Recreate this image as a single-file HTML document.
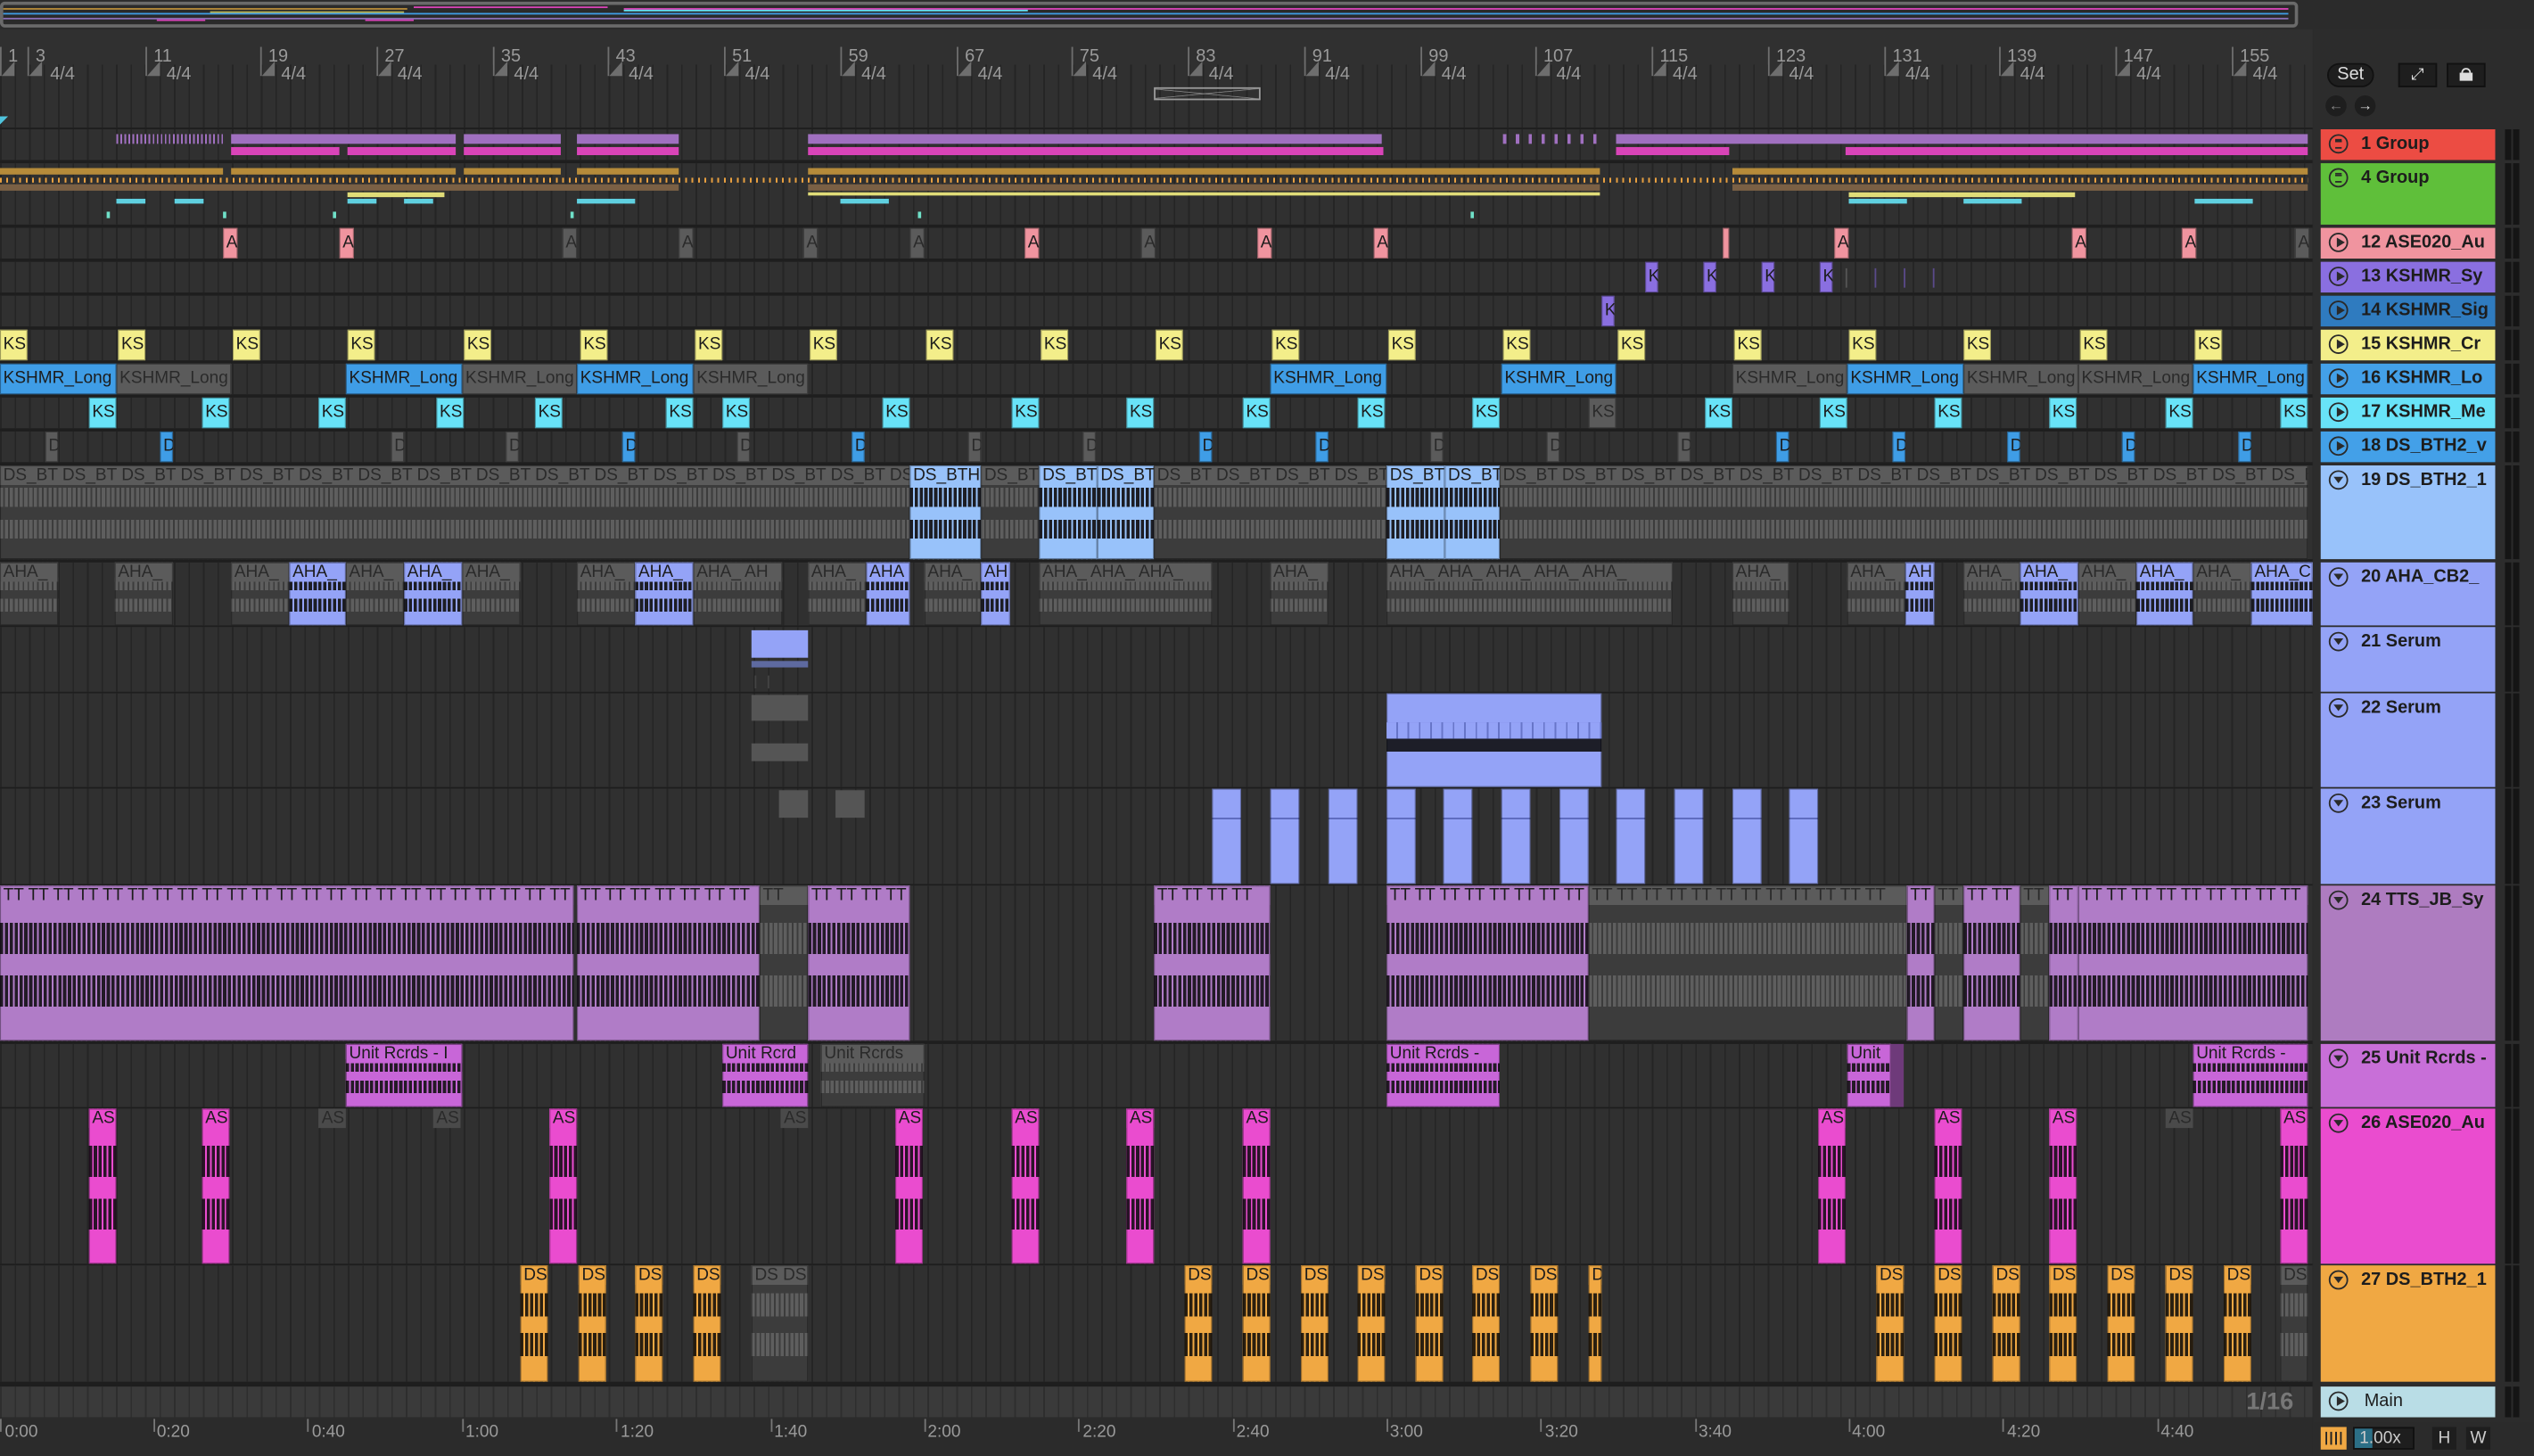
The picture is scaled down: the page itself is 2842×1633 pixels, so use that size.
<!DOCTYPE html>
<html><head><meta charset="utf-8">
<style>
html,body{margin:0;padding:0;background:#2b2b2b;overflow:hidden}
#w{position:absolute;left:0;top:0;width:1568px;height:901px;transform:scale(1.8125);transform-origin:0 0;background:#2b2b2b;font-family:"Liberation Sans",sans-serif;overflow:hidden}
i{font-style:normal}
.ab{position:absolute}
#ov{left:0;top:1px;width:1418px;height:12px;border:2px solid #6a6a6a;border-radius:3px;background:#2a2a2a}
#rul{left:0;top:18px;width:1431px;height:61px;background:#303030}
.grid{background-color:#303030;background-image:repeating-linear-gradient(90deg,#252525 0 1px,transparent 1px 8.966px)}
#arr{left:0;top:79px;width:1431px;height:798px;background:#1e1e1e}
.r{position:absolute;left:0;width:1431px}
.c{position:absolute;top:0;height:100%;overflow:hidden;white-space:nowrap;font-size:10.5px;line-height:12px;color:#1c1c1c;padding-left:2px;box-sizing:border-box;box-shadow:inset 0 0 0 0.6px rgba(0,0,0,.35);font-style:normal}
.s{line-height:19px}
.t{background:linear-gradient(to bottom,var(--h) 0 12px,transparent 12px),repeating-linear-gradient(90deg,transparent 0 2px,var(--b) 2px 3px),linear-gradient(to bottom,var(--b) 0 24%,var(--w) 24% 44%,var(--b) 44% 58%,var(--w) 58% 78%,var(--b) 78%)}
.s.g,.s.y,.s.bl,.s.cy,.s.pk,.s.pu,.s.sg{background:var(--h)}
.g{--h:#5b5b5b;--b:#3c3c3c;--w:#5e5e5e;color:#2a2a2a}
.y{--h:#f3ee8a}
.bl{--h:#3f9de6}
.cy{--h:#68e3f8}
.pk{--h:#f0949f}
.pu{--h:#8a6fe0}
.sg{--h:#2f7bbf}
.lb{--h:#98c2fa;--b:#98c2fa;--w:#1c1d24}
.ah{--h:#94a3f7;--b:#94a3f7;--w:#1c1d24}
.tt{--h:#b07cc7;--b:#b07cc7;--w:#221a26}
.un{--h:#c866d8;--b:#c866d8;--w:#241a26}
.as{--h:#ea4ccf;--b:#ea4ccf;--w:#2a1428}
.ds{--h:#f0a843;--b:#f0a843;--w:#2a1f10}
.band{position:absolute;height:5px}
.hd{position:absolute;left:1436px;width:108px;font-weight:bold;font-size:11px;color:#1d1d1d;box-sizing:border-box;padding-left:25px;line-height:19px;white-space:nowrap;overflow:hidden}
.hd .ic{position:absolute;left:5px;top:2.5px;width:12px;height:12px;border:1.3px solid #2a2a2a;border-radius:50%;box-sizing:border-box}
.hd .pl:after{content:"";position:absolute;left:4px;top:2.3px;border-left:5px solid #2a2a2a;border-top:3.3px solid transparent;border-bottom:3.3px solid transparent}
.hd .dn:after{content:"";position:absolute;left:2.2px;top:3.5px;border-top:4.5px solid #2a2a2a;border-left:3.3px solid transparent;border-right:3.3px solid transparent}
.hd .gr:after{content:"";position:absolute;left:2.5px;top:2.5px;width:4.5px;height:4px;border-top:1px solid #2a2a2a;border-bottom:1px solid #2a2a2a;box-shadow:0 1.5px 0 -0.5px #2a2a2a inset}
.m{position:absolute;left:1550px;width:10px;background:repeating-linear-gradient(90deg,#151515 0 4px,#2b2b2b 4px 5px)}
.bn{position:absolute;font-size:11px;color:#9a9a9a}
.fl{position:absolute;top:38px;width:0;height:0;border-left:8px solid transparent;border-bottom:9px solid #6e6e6e}
.fp{position:absolute;top:29px;width:1px;height:18px;background:#6e6e6e}
.tm{position:absolute;top:880px;font-size:10.5px;color:#9a9a9a}
.tk{position:absolute;top:878px;width:1px;height:8px;background:#777}
.ga{position:absolute;top:0;height:12px;background:#4a4a4a;color:#2a2a2a;font-size:10.5px;line-height:12px;padding-left:2px;box-sizing:border-box;overflow:hidden}
</style></head><body><div id="w">

<div id="ov" class="ab">
 <div class="ab" style="left:0;top:2px;width:250px;height:1px;background:#b68b3a"></div>
 <div class="ab" style="left:254px;top:1px;width:120px;height:1px;background:#d944b8"></div>
 <div class="ab" style="left:384px;top:2px;width:1030px;height:1px;background:#d944b8"></div>
 <div class="ab" style="left:0;top:5px;width:1414px;height:1px;background:#3f9de6"></div>
 <div class="ab" style="left:128px;top:4px;width:120px;height:1px;background:#b7b04e"></div>
 <div class="ab" style="left:0;top:8px;width:1414px;height:1px;background:#8a6fb4"></div>
 <div class="ab" style="left:95px;top:9px;width:30px;height:1px;background:#d944b8"></div>
 <div class="ab" style="left:224px;top:9px;width:30px;height:1px;background:#d944b8"></div>
 <div class="ab" style="left:384px;top:3px;width:250px;height:1px;background:#68e3f8"></div>
</div>

<div id="rul" class="ab">
 <div class="ab grid" style="left:0;top:22px;width:1431px;height:39px"></div>
</div>
<div class="ab" style="left:0;top:0;width:1431px;height:79px">
 <div class="fp" style="left:0"></div><div class="fl" style="left:1px"></div><div class="bn" style="left:5px;top:29px">1</div>
 <div class="fp" style="left:17px"></div><div class="fl" style="left:18px"></div><div class="bn" style="left:22px;top:29px">3</div><div class="bn" style="left:31px;top:40px">4/4</div>
 <div class="fp" style="left:90px"></div><div class="fl" style="left:91px"></div><div class="bn" style="left:95px;top:29px">11</div><div class="bn" style="left:103px;top:40px">4/4</div>
 <div class="fp" style="left:161px"></div><div class="fl" style="left:162px"></div><div class="bn" style="left:166px;top:29px">19</div><div class="bn" style="left:174px;top:40px">4/4</div>
 <div class="fp" style="left:233px"></div><div class="fl" style="left:234px"></div><div class="bn" style="left:238px;top:29px">27</div><div class="bn" style="left:246px;top:40px">4/4</div>
 <div class="fp" style="left:305px"></div><div class="fl" style="left:306px"></div><div class="bn" style="left:310px;top:29px">35</div><div class="bn" style="left:318px;top:40px">4/4</div>
 <div class="fp" style="left:376px"></div><div class="fl" style="left:377px"></div><div class="bn" style="left:381px;top:29px">43</div><div class="bn" style="left:389px;top:40px">4/4</div>
 <div class="fp" style="left:448px"></div><div class="fl" style="left:449px"></div><div class="bn" style="left:453px;top:29px">51</div><div class="bn" style="left:461px;top:40px">4/4</div>
 <div class="fp" style="left:520px"></div><div class="fl" style="left:521px"></div><div class="bn" style="left:525px;top:29px">59</div><div class="bn" style="left:533px;top:40px">4/4</div>
 <div class="fp" style="left:592px"></div><div class="fl" style="left:593px"></div><div class="bn" style="left:597px;top:29px">67</div><div class="bn" style="left:605px;top:40px">4/4</div>
 <div class="fp" style="left:663px"></div><div class="fl" style="left:664px"></div><div class="bn" style="left:668px;top:29px">75</div><div class="bn" style="left:676px;top:40px">4/4</div>
 <div class="fp" style="left:735px"></div><div class="fl" style="left:736px"></div><div class="bn" style="left:740px;top:29px">83</div><div class="bn" style="left:748px;top:40px">4/4</div>
 <div class="fp" style="left:807px"></div><div class="fl" style="left:808px"></div><div class="bn" style="left:812px;top:29px">91</div><div class="bn" style="left:820px;top:40px">4/4</div>
 <div class="fp" style="left:879px"></div><div class="fl" style="left:880px"></div><div class="bn" style="left:884px;top:29px">99</div><div class="bn" style="left:892px;top:40px">4/4</div>
 <div class="fp" style="left:950px"></div><div class="fl" style="left:951px"></div><div class="bn" style="left:955px;top:29px">107</div><div class="bn" style="left:963px;top:40px">4/4</div>
 <div class="fp" style="left:1022px"></div><div class="fl" style="left:1023px"></div><div class="bn" style="left:1027px;top:29px">115</div><div class="bn" style="left:1035px;top:40px">4/4</div>
 <div class="fp" style="left:1094px"></div><div class="fl" style="left:1095px"></div><div class="bn" style="left:1099px;top:29px">123</div><div class="bn" style="left:1107px;top:40px">4/4</div>
 <div class="fp" style="left:1166px"></div><div class="fl" style="left:1167px"></div><div class="bn" style="left:1171px;top:29px">131</div><div class="bn" style="left:1179px;top:40px">4/4</div>
 <div class="fp" style="left:1237px"></div><div class="fl" style="left:1238px"></div><div class="bn" style="left:1242px;top:29px">139</div><div class="bn" style="left:1250px;top:40px">4/4</div>
 <div class="fp" style="left:1309px"></div><div class="fl" style="left:1310px"></div><div class="bn" style="left:1314px;top:29px">147</div><div class="bn" style="left:1322px;top:40px">4/4</div>
 <div class="fp" style="left:1381px"></div><div class="fl" style="left:1382px"></div><div class="bn" style="left:1386px;top:29px">155</div><div class="bn" style="left:1394px;top:40px">4/4</div>
 <div class="ab" style="left:714px;top:54px;width:66px;height:8px;border:1px solid #9a9a9a;box-sizing:border-box;background:linear-gradient(to top right,transparent 46%,#9a9a9a 48%,transparent 52%),linear-gradient(to bottom right,transparent 46%,#9a9a9a 48%,transparent 52%)"></div>
 <div class="ab" style="left:0;top:72px;width:0;height:0;border-top:5px solid #4fc3dc;border-right:5px solid transparent"></div>
</div>

<div id="arr" class="ab">
<div class="r grid" style="top:1px;height:19px">
 <div class="band" style="left:72px;width:66px;top:3px;height:6px;background:repeating-linear-gradient(90deg,#a070c0 0 1px,transparent 1px 2.5px)"></div>
 <div class="band" style="left:143px;width:139px;top:3px;height:6px;background:#a070c0"></div><div class="band" style="left:287px;width:60px;top:3px;height:6px;background:#a070c0"></div>
 <div class="band" style="left:357px;width:63px;top:3px;height:6px;background:#a070c0"></div><div class="band" style="left:500px;width:355px;top:3px;height:6px;background:#a070c0"></div>
 <div class="band" style="left:930px;width:60px;top:3px;height:6px;background:repeating-linear-gradient(90deg,#a070c0 0 2px,transparent 2px 8px)"></div>
 <div class="band" style="left:1000px;width:428px;top:3px;height:6px;background:#a070c0"></div>
 <div class="band" style="left:143px;width:67px;top:11px;background:#d944b8"></div><div class="band" style="left:215px;width:67px;top:11px;background:#d944b8"></div>
 <div class="band" style="left:287px;width:60px;top:11px;background:#d944b8"></div><div class="band" style="left:357px;width:63px;top:11px;background:#d944b8"></div>
 <div class="band" style="left:500px;width:356px;top:11px;background:#d944b8"></div><div class="band" style="left:1000px;width:70px;top:11px;background:#d944b8"></div>
 <div class="band" style="left:1142px;width:286px;top:11px;background:#d944b8"></div>
</div>
<div class="r grid" style="top:22px;height:38px">
 <div class="band" style="left:0;width:138px;top:3px;height:4px;background:#b68b3a"></div><div class="band" style="left:143px;width:139px;top:3px;height:4px;background:#b68b3a"></div>
 <div class="band" style="left:287px;width:60px;top:3px;height:4px;background:#b68b3a"></div><div class="band" style="left:357px;width:63px;top:3px;height:4px;background:#b68b3a"></div>
 <div class="band" style="left:500px;width:490px;top:3px;height:4px;background:#b68b3a"></div><div class="band" style="left:1072px;width:356px;top:3px;height:4px;background:#b68b3a"></div>
 <div class="band" style="left:0;width:1428px;top:9px;height:3px;background:repeating-linear-gradient(90deg,#e8a040 0 1px,transparent 1px 4px)"></div>
 <div class="band" style="left:0;width:420px;top:13px;height:4px;background:#7a6045"></div><div class="band" style="left:500px;width:490px;top:13px;height:4px;background:#7a6045"></div>
 <div class="band" style="left:1072px;width:356px;top:13px;height:4px;background:#7a6045"></div>
 <div class="band" style="left:215px;width:60px;top:18px;height:3px;background:#e0dc78"></div><div class="band" style="left:500px;width:490px;top:18px;height:2px;background:#e0dc78"></div>
 <div class="band" style="left:1144px;width:140px;top:18px;height:3px;background:#e0dc78"></div>
 <div class="band" style="left:72px;width:18px;top:22px;height:3px;background:#5fd0e0"></div><div class="band" style="left:108px;width:18px;top:22px;height:3px;background:#5fd0e0"></div>
 <div class="band" style="left:215px;width:18px;top:22px;height:3px;background:#5fd0e0"></div><div class="band" style="left:250px;width:18px;top:22px;height:3px;background:#5fd0e0"></div>
 <div class="band" style="left:357px;width:36px;top:22px;height:3px;background:#5fd0e0"></div><div class="band" style="left:520px;width:30px;top:22px;height:3px;background:#5fd0e0"></div>
 <div class="band" style="left:1144px;width:36px;top:22px;height:3px;background:#5fd0e0"></div><div class="band" style="left:1215px;width:36px;top:22px;height:3px;background:#5fd0e0"></div>
 <div class="band" style="left:1358px;width:36px;top:22px;height:3px;background:#5fd0e0"></div>
 <div class="band" style="left:66px;width:2px;top:30px;height:4px;background:#6fe0c8"></div><div class="band" style="left:138px;width:2px;top:30px;height:4px;background:#6fe0c8"></div>
 <div class="band" style="left:206px;width:2px;top:30px;height:4px;background:#6fe0c8"></div><div class="band" style="left:353px;width:2px;top:30px;height:4px;background:#6fe0c8"></div>
 <div class="band" style="left:568px;width:2px;top:30px;height:4px;background:#6fe0c8"></div><div class="band" style="left:910px;width:2px;top:30px;height:4px;background:#6fe0c8"></div>
</div>
<div class="r grid" style="top:62px;height:19px">
 <i class="c s pk" style="left:138px;width:9px">A</i><i class="c s pk" style="left:210px;width:9px">A</i><i class="c s g" style="left:348px;width:9px">A</i><i class="c s g" style="left:420px;width:9px">A</i>
 <i class="c s g" style="left:497px;width:9px">A</i><i class="c s g" style="left:563px;width:9px">A</i><i class="c s pk" style="left:634px;width:9px">A</i><i class="c s g" style="left:706px;width:9px">A</i>
 <i class="c s pk" style="left:778px;width:9px">A</i><i class="c s pk" style="left:850px;width:9px">A</i><i class="c s pk" style="left:1066px;width:4px"></i><i class="c s pk" style="left:1135px;width:9px">A</i>
 <i class="c s pk" style="left:1282px;width:9px">A</i><i class="c s pk" style="left:1350px;width:9px">A</i><i class="c s g" style="left:1420px;width:9px">A</i>
</div>
<div class="r grid" style="top:83px;height:19px">
 <i class="c s pu" style="left:1018px;width:8px">K</i><i class="c s pu" style="left:1054px;width:8px">K</i><i class="c s pu" style="left:1090px;width:8px">K</i><i class="c s pu" style="left:1126px;width:8px">K</i>
 <i class="ab" style="left:1142px;top:4px;width:1px;height:12px;background:#555"></i><i class="ab" style="left:1160px;top:4px;width:1px;height:12px;background:#5a4a8a"></i><i class="ab" style="left:1178px;top:4px;width:1px;height:12px;background:#5a4a8a"></i><i class="ab" style="left:1196px;top:4px;width:1px;height:12px;background:#5a4a8a"></i>
</div>
<div class="r grid" style="top:104px;height:19px"><i class="c s pu" style="left:991px;width:8px">K</i></div>
<div class="r grid" style="top:125px;height:19px">
 <i class="c s y" style="left:0;width:17px">KS</i><i class="c s y" style="left:73px;width:17px">KS</i><i class="c s y" style="left:144px;width:17px">KS</i><i class="c s y" style="left:215px;width:17px">KS</i>
 <i class="c s y" style="left:287px;width:17px">KS</i><i class="c s y" style="left:359px;width:17px">KS</i><i class="c s y" style="left:430px;width:17px">KS</i><i class="c s y" style="left:501px;width:17px">KS</i>
 <i class="c s y" style="left:573px;width:17px">KS</i><i class="c s y" style="left:644px;width:17px">KS</i><i class="c s y" style="left:715px;width:17px">KS</i><i class="c s y" style="left:787px;width:17px">KS</i>
 <i class="c s y" style="left:859px;width:17px">KS</i><i class="c s y" style="left:930px;width:17px">KS</i><i class="c s y" style="left:1001px;width:17px">KS</i><i class="c s y" style="left:1073px;width:17px">KS</i>
 <i class="c s y" style="left:1144px;width:17px">KS</i><i class="c s y" style="left:1215px;width:17px">KS</i><i class="c s y" style="left:1287px;width:17px">KS</i><i class="c s y" style="left:1358px;width:17px">KS</i>
</div>
<div class="r grid" style="top:146px;height:19px">
 <i class="c s bl" style="left:0;width:72px">KSHMR_Long</i><i class="c s g" style="left:72px;width:71px">KSHMR_Long</i>
 <i class="c s bl" style="left:214px;width:72px">KSHMR_Long</i><i class="c s g" style="left:286px;width:71px">KSHMR_Long</i>
 <i class="c s bl" style="left:357px;width:72px">KSHMR_Long</i><i class="c s g" style="left:429px;width:71px">KSHMR_Long</i>
 <i class="c s bl" style="left:786px;width:72px">KSHMR_Long</i><i class="c s bl" style="left:929px;width:71px">KSHMR_Long</i>
 <i class="c s g" style="left:1072px;width:71px">KSHMR_Long</i><i class="c s bl" style="left:1143px;width:72px">KSHMR_Long</i>
 <i class="c s g" style="left:1215px;width:71px">KSHMR_Long</i><i class="c s g" style="left:1286px;width:71px">KSHMR_Long</i><i class="c s bl" style="left:1357px;width:71px">KSHMR_Long</i>
</div>
<div class="r grid" style="top:167px;height:19px">
 <i class="c s cy" style="left:55px;width:17px">KS</i><i class="c s cy" style="left:125px;width:17px">KS</i><i class="c s cy" style="left:197px;width:17px">KS</i><i class="c s cy" style="left:270px;width:17px">KS</i>
 <i class="c s cy" style="left:331px;width:17px">KS</i><i class="c s cy" style="left:412px;width:17px">KS</i><i class="c s cy" style="left:447px;width:17px">KS</i><i class="c s cy" style="left:546px;width:17px">KS</i>
 <i class="c s cy" style="left:626px;width:17px">KS</i><i class="c s cy" style="left:697px;width:17px">KS</i><i class="c s cy" style="left:769px;width:17px">KS</i><i class="c s cy" style="left:840px;width:17px">KS</i>
 <i class="c s cy" style="left:911px;width:17px">KS</i><i class="c s g" style="left:983px;width:17px">KS</i><i class="c s cy" style="left:1055px;width:17px">KS</i><i class="c s cy" style="left:1126px;width:17px">KS</i>
 <i class="c s cy" style="left:1197px;width:17px">KS</i><i class="c s cy" style="left:1268px;width:17px">KS</i><i class="c s cy" style="left:1340px;width:17px">KS</i><i class="c s cy" style="left:1411px;width:17px">KS</i>
</div>
<div class="r grid" style="top:188px;height:19px">
 <i class="c s g" style="left:28px;width:8px">D</i><i class="c s bl" style="left:99px;width:8px">D</i><i class="c s g" style="left:242px;width:8px">D</i><i class="c s g" style="left:313px;width:8px">D</i>
 <i class="c s bl" style="left:385px;width:8px">D</i><i class="c s g" style="left:456px;width:8px">D</i><i class="c s bl" style="left:527px;width:8px">D</i><i class="c s g" style="left:599px;width:8px">D</i>
 <i class="c s g" style="left:670px;width:8px">D</i><i class="c s bl" style="left:742px;width:8px">D</i><i class="c s bl" style="left:814px;width:8px">D</i><i class="c s g" style="left:885px;width:8px">D</i>
 <i class="c s g" style="left:957px;width:8px">D</i><i class="c s g" style="left:1038px;width:8px">D</i><i class="c s bl" style="left:1099px;width:8px">D</i><i class="c s bl" style="left:1171px;width:8px">D</i>
 <i class="c s bl" style="left:1242px;width:8px">D</i><i class="c s bl" style="left:1313px;width:8px">D</i><i class="c s bl" style="left:1385px;width:8px">D</i>
</div>
<div class="r grid" style="top:209px;height:58px">
 <i class="c t g" style="left:0;width:563px">DS_BT DS_BT DS_BT DS_BT DS_BT DS_BT DS_BT DS_BT DS_BT DS_BT DS_BT DS_BT DS_BT DS_BT DS_BT DS_BT</i>
 <i class="c t lb" style="left:563px;width:44px">DS_BTH</i><i class="c t g" style="left:607px;width:36px">DS_BT</i>
 <i class="c t lb" style="left:643px;width:36px">DS_BT</i><i class="c t lb" style="left:679px;width:35px">DS_BT</i>
 <i class="c t g" style="left:714px;width:144px">DS_BT DS_BT DS_BT DS_BT</i>
 <i class="c t lb" style="left:858px;width:36px">DS_BT</i><i class="c t lb" style="left:894px;width:34px">DS_BT</i>
 <i class="c t g" style="left:928px;width:500px">DS_BT DS_BT DS_BT DS_BT DS_BT DS_BT DS_BT DS_BT DS_BT DS_BT DS_BT DS_BT DS_BT DS_BT</i>
</div>
<div class="r grid" style="top:269px;height:39px">
 <i class="c t g" style="left:0;width:36px">AHA_</i><i class="c t g" style="left:71px;width:36px">AHA_</i><i class="c t g" style="left:143px;width:36px">AHA_</i>
 <i class="c t ah" style="left:179px;width:35px">AHA_</i><i class="c t g" style="left:214px;width:36px">AHA_</i><i class="c t ah" style="left:250px;width:36px">AHA_</i>
 <i class="c t g" style="left:286px;width:36px">AHA_</i><i class="c t g" style="left:357px;width:36px">AHA_</i><i class="c t ah" style="left:393px;width:36px">AHA_</i>
 <i class="c t g" style="left:429px;width:55px">AHA_ AH</i><i class="c t g" style="left:500px;width:36px">AHA_</i><i class="c t ah" style="left:536px;width:27px">AHA</i>
 <i class="c t g" style="left:572px;width:35px">AHA_</i><i class="c t ah" style="left:607px;width:18px">AH</i><i class="c t g" style="left:643px;width:107px">AHA_ AHA_ AHA_</i>
 <i class="c t g" style="left:786px;width:36px">AHA_</i><i class="c t g" style="left:858px;width:177px">AHA_ AHA_ AHA_ AHA_ AHA_</i>
 <i class="c t g" style="left:1072px;width:35px">AHA_</i><i class="c t g" style="left:1143px;width:36px">AHA_</i><i class="c t ah" style="left:1179px;width:18px">AH</i>
 <i class="c t g" style="left:1215px;width:35px">AHA_</i><i class="c t ah" style="left:1250px;width:36px">AHA_</i><i class="c t g" style="left:1286px;width:36px">AHA_</i>
 <i class="c t ah" style="left:1322px;width:35px">AHA_</i><i class="c t g" style="left:1357px;width:36px">AHA_</i><i class="c t ah" style="left:1393px;width:38px">AHA_C</i>
</div>
<div class="r grid" style="top:309px;height:40px">
 <i class="ab" style="left:465px;top:2px;width:35px;height:17px;background:#94a3f7"></i><i class="ab" style="left:465px;top:21px;width:35px;height:4px;background:#5e6aa0"></i>
 <i class="ab" style="left:467px;top:30px;width:1px;height:8px;background:#444"></i><i class="ab" style="left:475px;top:30px;width:1px;height:8px;background:#444"></i>
</div>
<div class="r grid" style="top:350px;height:58px">
 <i class="ab" style="left:465px;top:1px;width:35px;height:16px;background:#555"></i><i class="ab" style="left:465px;top:31px;width:35px;height:11px;background:#555"></i>
 <i class="c" style="left:858px;width:133px;background:linear-gradient(to bottom,#94a3f7 0 18px,#7c8ae0 18px 28px,#1d1e28 28px 36px,#94a3f7 36px)"></i>
 <i class="ab" style="left:858px;top:18px;width:133px;height:10px;background:repeating-linear-gradient(90deg,#94a3f7 0 6px,#6775c8 6px 7px)"></i>
</div>
<div class="r grid" style="top:409px;height:59px">
 <i class="ab" style="left:482px;top:1px;width:18px;height:17px;background:#555"></i><i class="ab" style="left:517px;top:1px;width:18px;height:17px;background:#555"></i>
 <i class="c ah" style="left:750px;width:18px;background:linear-gradient(#94a3f7 0 18px,#5f6cbf 18px 19px,#94a3f7 19px)"></i><i class="c ah" style="left:786px;width:18px;background:linear-gradient(#94a3f7 0 18px,#5f6cbf 18px 19px,#94a3f7 19px)"></i>
 <i class="c ah" style="left:822px;width:18px;background:linear-gradient(#94a3f7 0 18px,#5f6cbf 18px 19px,#94a3f7 19px)"></i><i class="c ah" style="left:858px;width:18px;background:linear-gradient(#94a3f7 0 18px,#5f6cbf 18px 19px,#94a3f7 19px)"></i>
 <i class="c ah" style="left:893px;width:18px;background:linear-gradient(#94a3f7 0 18px,#5f6cbf 18px 19px,#94a3f7 19px)"></i><i class="c ah" style="left:929px;width:18px;background:linear-gradient(#94a3f7 0 18px,#5f6cbf 18px 19px,#94a3f7 19px)"></i>
 <i class="c ah" style="left:965px;width:18px;background:linear-gradient(#94a3f7 0 18px,#5f6cbf 18px 19px,#94a3f7 19px)"></i><i class="c ah" style="left:1000px;width:18px;background:linear-gradient(#94a3f7 0 18px,#5f6cbf 18px 19px,#94a3f7 19px)"></i>
 <i class="c ah" style="left:1036px;width:18px;background:linear-gradient(#94a3f7 0 18px,#5f6cbf 18px 19px,#94a3f7 19px)"></i><i class="c ah" style="left:1072px;width:18px;background:linear-gradient(#94a3f7 0 18px,#5f6cbf 18px 19px,#94a3f7 19px)"></i>
 <i class="c ah" style="left:1107px;width:18px;background:linear-gradient(#94a3f7 0 18px,#5f6cbf 18px 19px,#94a3f7 19px)"></i>
</div>
<div class="r grid" style="top:469px;height:96px">
 <i class="c t tt" style="left:0;width:355px">TT TT TT TT TT TT TT TT TT TT TT TT TT TT TT TT TT TT TT TT TT TT TT TT</i>
 <i class="c t tt" style="left:357px;width:113px">TT TT TT TT TT TT TT</i><i class="c t g" style="left:470px;width:30px">TT</i>
 <i class="c t tt" style="left:500px;width:63px">TT TT TT TT</i><i class="c t tt" style="left:714px;width:72px">TT TT TT TT</i>
 <i class="c t tt" style="left:858px;width:125px">TT TT TT TT TT TT TT TT</i><i class="c t g" style="left:983px;width:197px">TT TT TT TT TT TT TT TT TT TT TT TT</i>
 <i class="c t tt" style="left:1180px;width:17px">TT</i><i class="c t g" style="left:1197px;width:18px">TT</i><i class="c t tt" style="left:1215px;width:35px">TT TT</i>
 <i class="c t g" style="left:1250px;width:18px">TT</i><i class="c t tt" style="left:1268px;width:18px">TT</i><i class="c t tt" style="left:1286px;width:142px">TT TT TT TT TT TT TT TT TT</i>
</div>
<div class="r grid" style="top:567px;height:39px">
 <i class="c t un" style="left:214px;width:72px">Unit Rcrds - I</i><i class="c t un" style="left:447px;width:53px">Unit Rcrd</i>
 <i class="c t g" style="left:508px;width:64px">Unit Rcrds</i><i class="c t un" style="left:858px;width:70px">Unit Rcrds -</i>
 <i class="c t un" style="left:1143px;width:27px">Unit</i><i class="ab" style="left:1170px;top:0;width:8px;height:39px;background:#6e3a7a"></i>
 <i class="c t un" style="left:1357px;width:71px">Unit Rcrds -</i>
</div>
<div class="r grid" style="top:607px;height:96px">
 <i class="c t as" style="left:55px;width:17px">AS</i><i class="c t as" style="left:125px;width:17px">AS</i><i class="ga" style="left:197px;width:17px">AS</i>
 <i class="ga" style="left:268px;width:17px">AS</i><i class="c t as" style="left:340px;width:17px">AS</i><i class="ga" style="left:483px;width:17px">AS</i>
 <i class="c t as" style="left:554px;width:17px">AS</i><i class="c t as" style="left:626px;width:17px">AS</i><i class="c t as" style="left:697px;width:17px">AS</i>
 <i class="c t as" style="left:769px;width:17px">AS</i><i class="c t as" style="left:1125px;width:17px">AS</i><i class="c t as" style="left:1197px;width:17px">AS</i>
 <i class="c t as" style="left:1268px;width:17px">AS</i><i class="ga" style="left:1340px;width:17px">AS</i><i class="c t as" style="left:1411px;width:17px">AS</i>
</div>
<div class="r grid" style="top:704px;height:72px">
 <i class="c t ds" style="left:322px;width:17px">DS</i><i class="c t ds" style="left:358px;width:17px">DS</i><i class="c t ds" style="left:393px;width:17px">DS</i><i class="c t ds" style="left:429px;width:17px">DS</i>
 <i class="c t g" style="left:465px;width:35px">DS DS</i>
 <i class="c t ds" style="left:733px;width:17px">DS</i><i class="c t ds" style="left:769px;width:17px">DS</i><i class="c t ds" style="left:805px;width:17px">DS</i><i class="c t ds" style="left:840px;width:17px">DS</i>
 <i class="c t ds" style="left:876px;width:17px">DS</i><i class="c t ds" style="left:911px;width:17px">DS</i><i class="c t ds" style="left:947px;width:17px">DS</i><i class="c t ds" style="left:983px;width:8px">D</i>
 <i class="c t ds" style="left:1161px;width:17px">DS</i><i class="c t ds" style="left:1197px;width:17px">DS</i><i class="c t ds" style="left:1233px;width:17px">DS</i><i class="c t ds" style="left:1268px;width:17px">DS</i>
 <i class="c t ds" style="left:1304px;width:17px">DS</i><i class="c t ds" style="left:1340px;width:17px">DS</i><i class="c t ds" style="left:1376px;width:17px">DS</i><i class="c t g" style="left:1411px;width:17px">DS</i>
</div>
<div class="r" style="top:779px;height:19px;background-color:#3a3a3a;background-image:repeating-linear-gradient(90deg,#2e2e2e 0 1px,transparent 1px 8.966px)">
 <div class="ab" style="left:1390px;top:0;font-size:15px;line-height:19px;color:#777;font-weight:bold">1/16</div>
</div>
</div>

<div class="ab" style="left:0;top:877px;width:1431px;height:24px;background:#2b2b2b"></div>
<div class="tk" style="left:0"></div><div class="tm" style="left:3px">0:00</div>
<div class="tk" style="left:95px"></div><div class="tm" style="left:97px">0:20</div>
<div class="tk" style="left:190px"></div><div class="tm" style="left:193px">0:40</div>
<div class="tk" style="left:286px"></div><div class="tm" style="left:288px">1:00</div>
<div class="tk" style="left:381px"></div><div class="tm" style="left:384px">1:20</div>
<div class="tk" style="left:477px"></div><div class="tm" style="left:479px">1:40</div>
<div class="tk" style="left:572px"></div><div class="tm" style="left:574px">2:00</div>
<div class="tk" style="left:667px"></div><div class="tm" style="left:670px">2:20</div>
<div class="tk" style="left:763px"></div><div class="tm" style="left:765px">2:40</div>
<div class="tk" style="left:858px"></div><div class="tm" style="left:860px">3:00</div>
<div class="tk" style="left:953px"></div><div class="tm" style="left:956px">3:20</div>
<div class="tk" style="left:1049px"></div><div class="tm" style="left:1051px">3:40</div>
<div class="tk" style="left:1144px"></div><div class="tm" style="left:1146px">4:00</div>
<div class="tk" style="left:1239px"></div><div class="tm" style="left:1242px">4:20</div>
<div class="tk" style="left:1335px"></div><div class="tm" style="left:1337px">4:40</div>

<div class="ab" style="left:1432px;top:18px;width:136px;height:862px;background:#2c2c2c"></div>
<div class="ab" style="left:1440px;top:39px;width:29px;height:15px;border-radius:8px;background:#1e1e1e;border:1px solid #111;box-sizing:border-box;color:#ddd;font-size:11px;line-height:13px;text-align:center">Set</div>
<div class="ab" style="left:1484px;top:39px;width:24px;height:15px;background:#1e1e1e;border:1px solid #111;box-sizing:border-box;color:#ddd;font-size:10px;line-height:13px;text-align:center">⤢</div>
<div class="ab" style="left:1514px;top:39px;width:24px;height:15px;background:#1e1e1e;border:1px solid #111;box-sizing:border-box"><div class="ab" style="left:7px;top:5px;width:8px;height:5px;background:#ddd"></div><div class="ab" style="left:8px;top:2px;width:4px;height:4px;border:1px solid #ddd;border-bottom:0;border-radius:3px 3px 0 0"></div></div>
<div class="ab" style="left:1439px;top:59px;width:13px;height:13px;border-radius:50%;background:#1e1e1e;color:#888;font-size:9px;line-height:13px;text-align:center">←</div>
<div class="ab" style="left:1457px;top:59px;width:13px;height:13px;border-radius:50%;background:#1e1e1e;color:#ddd;font-size:9px;line-height:13px;text-align:center">→</div>

<div class="hd" style="top:80px;height:19px;background:#ec4c43"><span class="ic gr"></span>1 Group</div>
<div class="hd" style="top:101px;height:38px;background:#5fbf3a"><span class="ic gr"></span>4 Group</div>
<div class="hd" style="top:141px;height:19px;background:#f0949f"><span class="ic pl"></span>12 ASE020_Au</div>
<div class="hd" style="top:162px;height:19px;background:#8a6fe0"><span class="ic pl"></span>13 KSHMR_Sy</div>
<div class="hd" style="top:183px;height:19px;background:#2f7bbf"><span class="ic pl"></span>14 KSHMR_Sig</div>
<div class="hd" style="top:204px;height:19px;background:#f3ee8a"><span class="ic pl"></span>15 KSHMR_Cr</div>
<div class="hd" style="top:225px;height:19px;background:#43a0e8"><span class="ic pl"></span>16 KSHMR_Lo</div>
<div class="hd" style="top:246px;height:19px;background:#68e3f8"><span class="ic pl"></span>17 KSHMR_Me</div>
<div class="hd" style="top:267px;height:19px;background:#43a0e8"><span class="ic pl"></span>18 DS_BTH2_v</div>
<div class="hd" style="top:288px;height:58px;background:#98c2fa"><span class="ic dn"></span>19 DS_BTH2_1</div>
<div class="hd" style="top:348px;height:39px;background:#94a3f7"><span class="ic dn"></span>20 AHA_CB2_</div>
<div class="hd" style="top:388px;height:40px;background:#94a3f7"><span class="ic dn"></span>21 Serum</div>
<div class="hd" style="top:429px;height:58px;background:#94a3f7"><span class="ic dn"></span>22 Serum</div>
<div class="hd" style="top:488px;height:59px;background:#94a3f7"><span class="ic dn"></span>23 Serum</div>
<div class="hd" style="top:548px;height:96px;background:#ae7cc0"><span class="ic dn"></span>24 TTS_JB_Sy</div>
<div class="hd" style="top:646px;height:39px;background:#c86fd8"><span class="ic dn"></span>25 Unit Rcrds -</div>
<div class="hd" style="top:686px;height:96px;background:#ea4ccf"><span class="ic dn"></span>26 ASE020_Au</div>
<div class="hd" style="top:783px;height:72px;background:#f0a843"><span class="ic dn"></span>27 DS_BTH2_1</div>
<div class="hd" style="top:858px;height:19px;background:#b9dde6;font-weight:normal;padding-left:27px"><span class="ic pl"></span>Main</div>

<div class="m" style="top:80px;height:19px"></div><div class="m" style="top:101px;height:38px"></div><div class="m" style="top:141px;height:19px"></div>
<div class="m" style="top:162px;height:19px"></div><div class="m" style="top:183px;height:19px"></div><div class="m" style="top:204px;height:19px"></div>
<div class="m" style="top:225px;height:19px"></div><div class="m" style="top:246px;height:19px"></div><div class="m" style="top:267px;height:19px"></div>
<div class="m" style="top:288px;height:58px"></div><div class="m" style="top:348px;height:39px"></div><div class="m" style="top:388px;height:40px"></div>
<div class="m" style="top:429px;height:58px"></div><div class="m" style="top:488px;height:59px"></div><div class="m" style="top:548px;height:96px"></div>
<div class="m" style="top:646px;height:39px"></div><div class="m" style="top:686px;height:96px"></div><div class="m" style="top:783px;height:72px"></div>
<div class="m" style="top:858px;height:19px"></div>

<div class="ab" style="left:1436px;top:883px;width:16px;height:14px;background:#f0a843"><div class="ab" style="left:3px;top:3px;width:10px;height:8px;background:repeating-linear-gradient(90deg,#222 0 1px,transparent 1px 3px)"></div></div>
<div class="ab" style="left:1456px;top:883px;width:38px;height:14px;background:#1e1e1e;border:1px solid #111;box-sizing:border-box"><div class="ab" style="left:0;top:0;width:11px;height:12px;background:#2c6f86"></div><div class="ab" style="left:3px;top:0;font-size:10.5px;line-height:12px;color:#ccc">1.00x</div></div>
<div class="ab" style="left:1505px;top:883px;width:15px;height:14px;background:#1e1e1e;color:#ccc;font-size:10.5px;line-height:14px;text-align:center">H</div>
<div class="ab" style="left:1526px;top:883px;width:15px;height:14px;background:#1e1e1e;color:#ccc;font-size:10.5px;line-height:14px;text-align:center">W</div>

</div></body></html>
